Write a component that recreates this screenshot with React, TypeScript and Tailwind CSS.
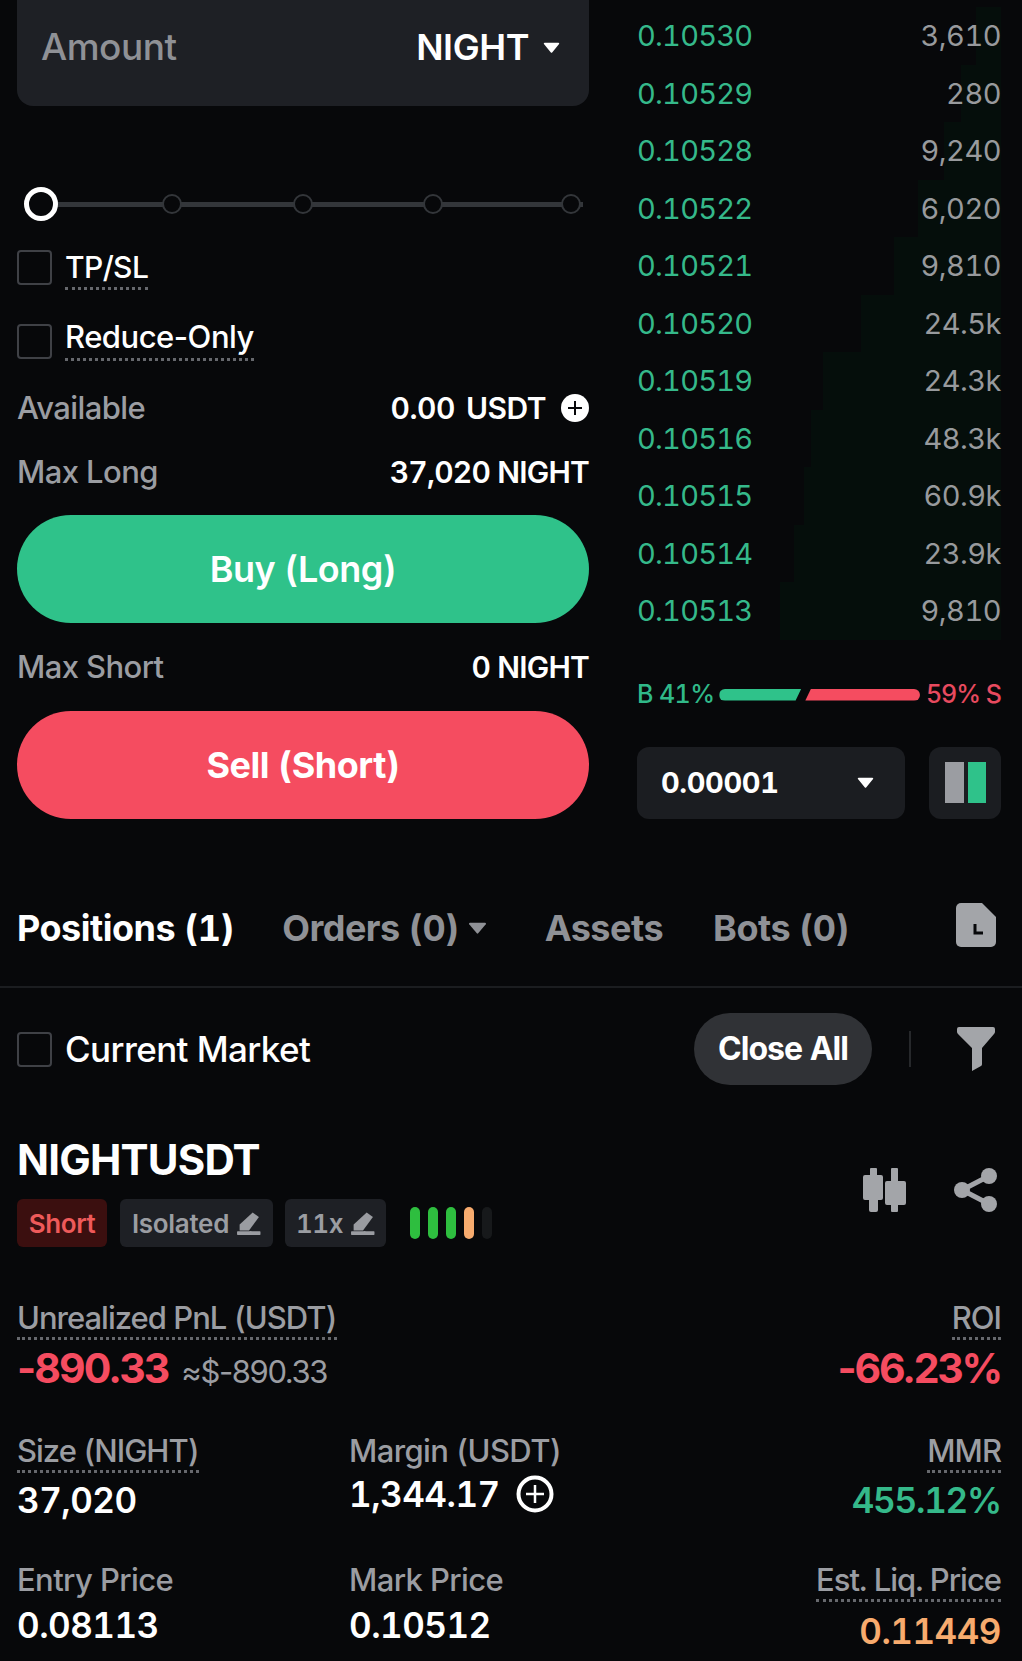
import React from "react";

const F = "font-['Inter','Liberation_Sans',sans-serif]";

const rows: [string, string, number][] = [
  ["0.10530", "3,610", 25],
  ["0.10529", "280", 40],
  ["0.10528", "9,240", 57],
  ["0.10522", "6,020", 83],
  ["0.10521", "9,810", 107],
  ["0.10520", "24.5k", 140],
  ["0.10519", "24.3k", 178],
  ["0.10516", "48.3k", 190],
  ["0.10515", "60.9k", 197],
  ["0.10514", "23.9k", 207],
  ["0.10513", "9,810", 221],
];

function Caret({ className }: { className: string }) {
  return (
    <svg viewBox="0 0 16 12" className={className} fill="currentColor">
      <path d="M1.5 1.5h13a.8.8 0 0 1 .6 1.3L8.6 10.6a.8.8 0 0 1-1.2 0L.9 2.8a.8.8 0 0 1 .6-1.3z" />
    </svg>
  );
}

function Check() {
  return <div className="w-[35px] h-[35px] rounded-[4px] border-2 border-[#3f4146] shrink-0" />;
}

function Pen() {
  return (
    <svg viewBox="0 0 24 24" className="w-[25px] h-[25px] text-[#9a9ca1]" fill="currentColor">
      <path d="M16 1.5l6 4.2-9.5 13H3.5v-5.8z" />
      <rect x="13" y="19.5" width="10.5" height="3.5" rx="0.6" />
      <rect x="1" y="19.5" width="14" height="3.5" rx="0.6" />
    </svg>
  );
}

function Dot({ className }: { className: string }) {
  return <div className={`relative w-[20px] h-[20px] rounded-full border-2 border-[#33363a] bg-[#07080a] shrink-0 ${className}`} />;
}

function Label({ children, dotted = true }: { children: React.ReactNode; dotted?: boolean }) {
  return (
    <span className={`text-[31px] leading-[36px] font-medium text-[#9b9da2] ${dotted ? "tracking-[-1px] border-b-[3px] border-dotted border-[#66686d] pb-[1px]" : "tracking-[-0.6px]"}`}>
      {children}
    </span>
  );
}

export default function App() {
  return (
    <div className={`${F} tabular-nums w-[1022px] h-[1661px] overflow-hidden bg-[#07080a] text-white`}>
      <div className="flex pl-[17px] pr-[21px] gap-[48px] h-[868px]">
        <div className="w-[572px] shrink-0">
          <div className="h-[106px] bg-[#1e2025] rounded-b-[16px] flex items-start justify-between pl-[24px] pr-[29px] pt-[25px]">
            <span className="text-[37px] leading-[44px] font-medium tracking-[-0.5px] text-[#8f9196]">Amount</span>
            <span className="flex items-center gap-[14px]">
              <span className="text-[36px] leading-[44px] font-semibold tracking-[-0.4px]">NIGHT</span>
              <Caret className="w-[17px] h-[13px] text-white" />
            </span>
          </div>
          <div className="h-[36px] mt-[80px] relative flex items-center pl-[7px]">
            <div className="absolute left-[20px] right-[6px] h-[5px] bg-[#33363a]" />
            <div className="relative w-[34px] h-[34px] rounded-full border-[5px] border-white bg-[#07080a] shrink-0" />
            <Dot className="ml-[104px]" />
            <Dot className="ml-[111px]" />
            <Dot className="ml-[110px]" />
            <Dot className="ml-[118px]" />
          </div>
          <div className="flex items-center gap-[13px] mt-[28px] h-[35px]">
            <Check />
            <span className="text-[30px] leading-[36px] font-medium tracking-[-0.6px] border-b-[3px] border-dotted border-[#66686d] mt-[4px] pb-[2px]">TP/SL</span>
          </div>
          <div className="flex items-center gap-[13px] mt-[39px] h-[35px]">
            <Check />
            <span className="text-[31px] leading-[36px] font-medium tracking-[-0.5px] [font-variant-numeric:normal] border-b-[3px] border-dotted border-[#66686d] -mt-[3px] pb-[3px]">Reduce-Only</span>
          </div>
          <div className="flex items-center justify-between mt-[31px] h-[36px]">
            <Label dotted={false}>Available</Label>
            <span className="flex items-center">
              <span className="text-[30px] leading-[36px] font-semibold tracking-[-0.5px]">0.00</span>
              <span className="text-[30px] leading-[36px] font-semibold tracking-[-0.5px] ml-[11px]">USDT</span>
              <svg viewBox="0 0 28 28" className="w-[28px] h-[28px] ml-[15px]">
                <circle cx="14" cy="14" r="14" fill="#fff" />
                <path d="M14 7v14M7 14h14" stroke="#07080a" strokeWidth="2" />
              </svg>
            </span>
          </div>
          <div className="flex items-center justify-between mt-[28px] h-[36px]">
            <Label dotted={false}>Max Long</Label>
            <span className="text-[30px] leading-[36px] font-semibold tracking-[-0.8px]">37,020 NIGHT</span>
          </div>
          <div className="mt-[25px] h-[108px] rounded-full bg-[#2fc28a] flex items-center justify-center text-[36px] font-semibold tracking-[-0.5px]">Buy (Long)</div>
          <div className="flex items-center justify-between mt-[26px] h-[36px]">
            <Label dotted={false}>Max Short</Label>
            <span className="text-[30px] leading-[36px] font-semibold tracking-[-0.8px]">0 NIGHT</span>
          </div>
          <div className="mt-[26px] h-[108px] rounded-full bg-[#f54c60] flex items-center justify-center text-[36px] font-bold tracking-[-0.5px]">Sell (Short)</div>
        </div>

        <div className="flex-1 min-w-0">
          <div className="pt-[7px]">
            {rows.map(([p, q, w]) => (
              <div key={p} className="relative h-[57.5px] flex items-center justify-between">
                <div className="absolute right-0 top-0 bottom-0 bg-[#050e0b]" style={{ width: w }} />
                <span className="relative text-[29px] tracking-[-0.75px] text-[#35b98a]">{p}</span>
                <span className="relative text-[29px] tracking-[-0.5px] text-[#989a9d]">{q}</span>
              </div>
            ))}
          </div>
          <div className="flex items-center mt-[37px] h-[36px]">
            <span className="text-[25px] font-medium text-[#30b989] tracking-[-0.6px]">B 41%</span>
            <div className="ml-[5px] w-[82px] h-[12px] bg-[#2fc28a] rounded-l-full [clip-path:polygon(0_0,100%_0,93%_100%,0_100%)]" />
            <div className="ml-[4px] flex-1 h-[12px] bg-[#f54c60] rounded-r-full [clip-path:polygon(5%_0,100%_0,100%_100%,0_100%)]" />
            <span className="ml-[6px] text-[25px] font-medium text-[#e84a5f] tracking-[-1px]">59% S</span>
          </div>
          <div className="flex items-center gap-[24px] mt-[34px]">
            <div className="w-[268px] h-[72px] rounded-[12px] bg-[#1b1d21] flex items-center justify-between pl-[24px] pr-[31px]">
              <span className="text-[29px] font-bold tracking-[-0.4px]">0.00001</span>
              <Caret className="w-[17px] h-[13px] text-white" />
            </div>
            <div className="w-[72px] h-[72px] rounded-[12px] bg-[#1b1d21] flex items-center justify-center gap-[4px]">
              <div className="w-[19px] h-[41px] bg-[#9b9da2]" />
              <div className="w-[18px] h-[41px] bg-[#2fc28a]" />
            </div>
          </div>
        </div>
      </div>

      <div className="h-[120px] border-b-2 border-[#1b1d20] pl-[17px] pr-[26px] flex items-start justify-between pt-[38px]">
        <div className="flex items-center h-[44px] text-[36px] font-bold tracking-[-0.5px] text-[#8f9196]">
          <span className="text-white">Positions (1)</span>
          <span className="ml-[48px]">Orders (0)</span>
          <Caret className="w-[19px] h-[14px] ml-[9px]" />
          <span className="ml-[58px]">Assets</span>
          <span className="ml-[50px]">Bots (0)</span>
        </div>
        <svg viewBox="0 0 40 44" className="w-[40px] h-[44px] text-[#a3a5a9] -mt-[3px]" fill="currentColor">
          <path d="M5 0h21l14 14v25a5 5 0 0 1-5 5H5a5 5 0 0 1-5-5V5a5 5 0 0 1 5-5z" />
          <path d="M19 21v9h8" fill="none" stroke="#07080a" strokeWidth="3" />
        </svg>
      </div>

      <div className="flex items-center justify-between pl-[17px] pr-[26px] mt-[25px] h-[72px]">
        <div className="flex items-center gap-[13px]">
          <Check />
          <span className="text-[35px] leading-[44px] font-medium tracking-[-0.6px]">Current Market</span>
        </div>
        <div className="flex items-center">
          <div className="w-[178px] h-[72px] rounded-full bg-[#303236] flex items-center justify-center text-[32px] font-bold tracking-[-1px]">Close All</div>
          <div className="w-[2px] h-[36px] bg-[#26282b] ml-[37px]" />
          <svg viewBox="0 0 40 44" className="w-[40px] h-[44px] ml-[45px] text-[#a3a5a9]" fill="currentColor">
            <path d="M1 2a2 2 0 0 1 2-2h34a2 2 0 0 1 2 2v3a3 3 0 0 1-1 2L26 21v16a2 2 0 0 1-1 2l-9 5V21L2 7a3 3 0 0 1-1-2z" />
          </svg>
        </div>
      </div>

      <div className="flex items-center justify-between pl-[17px] pr-[24px] mt-[50px]">
        <div>
          <div className="text-[42px] leading-[50px] font-bold tracking-[-0.8px]">NIGHTUSDT</div>
          <div className="flex items-center mt-[14px] h-[48px]">
            <div className="h-[48px] w-[90px] rounded-[6px] bg-[#3b0f0f] flex items-center justify-center text-[26px] font-semibold tracking-[-0.4px] text-[#ee5a5a]">Short</div>
            <div className="h-[48px] w-[153px] ml-[13px] rounded-[6px] bg-[#1e2025] flex items-center justify-center gap-[7px] text-[26px] font-semibold tracking-[-0.3px] text-[#9b9da2]">
              Isolated <Pen />
            </div>
            <div className="h-[48px] w-[101px] ml-[12px] rounded-[6px] bg-[#1e2025] flex items-center justify-center gap-[7px] text-[26px] font-semibold tracking-[-0.4px] text-[#9b9da2]">
              11x <Pen />
            </div>
            <div className="flex items-center gap-[8px] ml-[24px]">
              <div className="w-[10px] h-[32px] rounded-full bg-[#2ebe3f]" />
              <div className="w-[10px] h-[32px] rounded-full bg-[#2ebe3f]" />
              <div className="w-[10px] h-[32px] rounded-full bg-[#2ebe3f]" />
              <div className="w-[10px] h-[32px] rounded-full bg-[#f7ab6e]" />
              <div className="w-[10px] h-[32px] rounded-full bg-[#17191b]" />
            </div>
          </div>
        </div>
        <div className="flex items-center gap-[48px] -mt-[2px]">
          <svg viewBox="0 0 44 44" className="w-[44px] h-[44px] text-[#a3a5a9]" fill="currentColor">
            <path d="M9 0h5a1 1 0 0 1 1 1v6h4a2 2 0 0 1 2 2v21a2 2 0 0 1-2 2h-3v10a2 2 0 0 1-2 2H9a2 2 0 0 1-2-2V32H3a2 2 0 0 1-2-2V9a2 2 0 0 1 2-2h5V1a1 1 0 0 1 1-1z" />
            <path d="M30 0h5a1 1 0 0 1 1 1v12h6a2 2 0 0 1 2 2v20a2 2 0 0 1-2 2h-6v6a1 1 0 0 1-1 1h-5a1 1 0 0 1-1-1v-6h-4a2 2 0 0 1-2-2V15a2 2 0 0 1 2-2h4V1a1 1 0 0 1 1-1z" />
          </svg>
          <svg viewBox="0 0 44 44" className="w-[44px] h-[44px] text-[#a3a5a9]" fill="currentColor">
            <circle cx="35" cy="8" r="8" />
            <circle cx="8" cy="22" r="8" />
            <circle cx="35" cy="36" r="8" />
            <path d="M35 8L8 22l27 14" fill="none" stroke="currentColor" strokeWidth="5" />
          </svg>
        </div>
      </div>

      <div className="pl-[17px] pr-[21px] mt-[53px]">
        <div className="flex items-start justify-between">
          <div>
            <Label>Unrealized PnL (USDT)</Label>
            <div className="flex items-baseline mt-[7px]">
              <span className="text-[41px] leading-[50px] font-bold tracking-[-1.9px] [font-variant-numeric:normal] text-[#f54c60]">-890.33</span>
              <span className="text-[31px] font-normal tracking-[-1.4px] [font-variant-numeric:normal] text-[#9b9da2] ml-[13px]">≈$-890.33</span>
            </div>
          </div>
          <div className="flex flex-col items-end">
            <Label>ROI</Label>
            <span className="text-[41px] leading-[50px] font-bold tracking-[-2.2px] [font-variant-numeric:normal] text-[#f54c60] mt-[3px]">-66.23%</span>
          </div>
        </div>

        <div className="grid grid-cols-[332px_1fr_auto] mt-[37px]">
          <div className="flex flex-col items-start">
            <Label>Size (NIGHT)</Label>
            <span className="text-[35px] leading-[44px] font-semibold tracking-[-0.5px] mt-[5px]">37,020</span>
          </div>
          <div className="flex flex-col items-start">
            <Label dotted={false}>Margin (USDT)</Label>
            <span className="flex items-center gap-[16px] mt-[3px]">
              <span className="text-[35px] leading-[44px] font-semibold tracking-[-0.5px]">1,344.17</span>
              <svg viewBox="0 0 38 38" className="w-[38px] h-[38px]">
                <circle cx="19" cy="19" r="16.5" fill="none" stroke="#fff" strokeWidth="4" />
                <path d="M19 10v18M10 19h18" stroke="#fff" strokeWidth="2.5" />
              </svg>
            </span>
          </div>
          <div className="flex flex-col items-end">
            <Label>MMR</Label>
            <span className="text-[35px] leading-[44px] font-semibold tracking-[-1.2px] text-[#35b98a] mt-[5px]">455.12%</span>
          </div>
        </div>

        <div className="grid grid-cols-[332px_1fr_auto] mt-[40px]">
          <div className="flex flex-col items-start">
            <Label dotted={false}>Entry Price</Label>
            <span className="text-[35px] leading-[44px] font-semibold tracking-[-0.5px] mt-[5px]">0.08113</span>
          </div>
          <div className="flex flex-col items-start">
            <Label dotted={false}>Mark Price</Label>
            <span className="text-[35px] leading-[44px] font-semibold tracking-[-0.5px] mt-[5px]">0.10512</span>
          </div>
          <div className="flex flex-col items-end">
            <Label>Est. Liq. Price</Label>
            <span className="text-[35px] leading-[44px] font-semibold tracking-[-0.5px] text-[#f7ab6e] mt-[7px]">0.11449</span>
          </div>
        </div>
      </div>
    </div>
  );
}
